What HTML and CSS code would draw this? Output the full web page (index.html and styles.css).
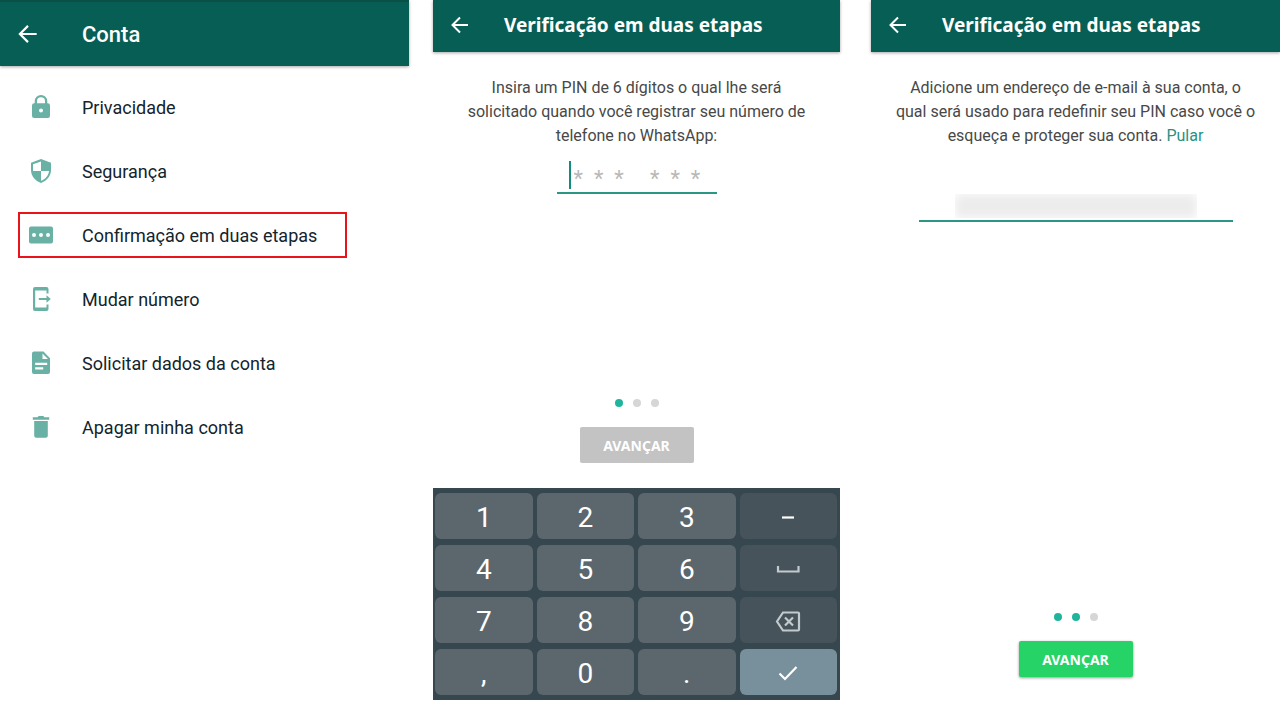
FILE: index.html
```html
<!DOCTYPE html>
<html lang="pt-BR">
<head>
    <meta charset="UTF-8">
    <meta name="viewport" content="width=device-width, initial-scale=1.0">
    <title>Verificação em duas etapas</title>
    <link rel="stylesheet" href="styles.css">
</head>
<body>
    <main class="screens">
        <!-- Conta -->
        <section class="screen">
            <header class="app-bar app-bar-tall">
                <button class="back" aria-label="Voltar">
                    <svg width="26" height="26" viewBox="0 0 24 24"><path d="M4.500 12H20M12 4.500 4.500 12l7.500 7.500"/></svg>
                </button>
                <h1>Conta</h1>
            </header>
            <nav class="menu">
                <a href="#" class="menu-item">
                    <svg viewBox="0 0 24 24"><path fill-rule="evenodd" d="M18.800 8.300h-.5V6.300a6.300 6.300 0 0 0-12.600 0v2h-.5A2.200 2.200 0 0 0 3 10.500v10.200A2.200 2.200 0 0 0 5.200 23h13.600a2.200 2.200 0 0 0 2.200-2.300V10.500a2.200 2.200 0 0 0-2.200-2.200zM8 6.300a4 4 0 0 1 8 0v2H8zM12 17.600a2 2 0 1 1 0-4 2 2 0 0 1 0 4z"/></svg>
                    <span>Privacidade</span>
                </a>
                <a href="#" class="menu-item">
                    <svg viewBox="0 0 24 24"><path fill-rule="evenodd" d="M12 0 2 3.700V11c0 6 4.300 11 10 13 5.700-2 10-7 10-13V3.700zM12 2.400V12h8c-.5 4.500-3.600 8.300-8 9.800V12H4V5.300z"/></svg>
                    <span>Segurança</span>
                </a>
                <a href="#" class="menu-item selected">
                    <svg viewBox="0 0 24 24"><path fill-rule="evenodd" d="M2 3.500h20a2 2 0 0 1 2 2v13a2 2 0 0 1-2 2H2a2 2 0 0 1-2-2v-13a2 2 0 0 1 2-2zM5 9.900a2 2 0 1 0 0 4 2 2 0 0 0 0-4zm7 0a2 2 0 1 0 0 4 2 2 0 0 0 0-4zm7 0a2 2 0 1 0 0 4 2 2 0 0 0 0-4z"/></svg>
                    <span>Confirmação em duas etapas</span>
                </a>
                <a href="#" class="menu-item">
                    <svg viewBox="0 0 24 24"><path d="M6 0h11.500a2 2 0 0 1 2 2v4.500h-2V3.500H6.200v17h11.300v-3h2V22a2 2 0 0 1-2 2H6a2 2 0 0 1-2-2V2a2 2 0 0 1 2-2zM9.800 10.900h7.700V8.300L21.800 12l-4.300 3.700v-2.600H9.800z"/></svg>
                    <span>Mudar número</span>
                </a>
                <a href="#" class="menu-item">
                    <svg viewBox="0 0 24 24"><path fill-rule="evenodd" d="M5 .5h9.500l6.500 6.700V21a2 2 0 0 1-2 2H5a2 2 0 0 1-2-2V2.500a2 2 0 0 1 2-2zM13.500 2.500V8H19zM6.200 11.800v2.200h12v-2.200zm0 4.500v2.200h8v-2.200z"/></svg>
                    <span>Solicitar dados da conta</span>
                </a>
                <a href="#" class="menu-item">
                    <svg viewBox="0 0 24 24"><path d="M5.200 6h13.600v14.800a2 2 0 0 1-2 2H7.200a2 2 0 0 1-2-2zM3.800 2.300h4.700l1.200-1.300h4.600l1.200 1.300h4.700v2.500H3.800z"/></svg>
                    <span>Apagar minha conta</span>
                </a>
            </nav>
        </section>

        <!-- PIN -->
        <section class="screen screen-pin">
            <header class="app-bar">
                <button class="back" aria-label="Voltar">
                    <svg width="24" height="24" viewBox="0 0 24 24"><path d="M4.500 12H20M12 4.500 4.500 12l7.500 7.500"/></svg>
                </button>
                <h2>Verificação em duas etapas</h2>
            </header>
            <label class="intro" for="pin">Insira um PIN de 6 dígitos o qual lhe será<br>solicitado quando você registrar seu número de<br>telefone no WhatsApp:</label>
            <div class="field pin-field">
                <span class="caret"></span>
                <input id="pin" type="text" inputmode="numeric" placeholder="*&nbsp;&nbsp;*&nbsp;&nbsp;*&nbsp;&nbsp;&nbsp;&nbsp;&thinsp;*&nbsp;&nbsp;*&nbsp;&nbsp;*">
            </div>
            <div class="actions">
                <div class="dots"><i class="on"></i><i></i><i></i></div>
                <button class="next" disabled>AVANÇAR</button>
            </div>
            <div class="keypad">
                <button>1</button>
                <button>2</button>
                <button>3</button>
                <button class="side" aria-label="Menos"><svg class="minus" width="26" height="26" viewBox="0 0 26 26"><path d="M7 13.500h12"/></svg></button>
                <button>4</button>
                <button>5</button>
                <button>6</button>
                <button class="side" aria-label="Espaço"><svg width="26" height="26" viewBox="0 0 26 26"><path d="M3 10v5.500h20.500V10"/></svg></button>
                <button>7</button>
                <button>8</button>
                <button>9</button>
                <button class="side" aria-label="Apagar"><svg width="26" height="26" viewBox="0 0 26 26"><path d="M8 4.500h15a1 1 0 0 1 1 1v16a1 1 0 0 1-1 1H8l-6-9zM10 9.500l8 8m0-8-8 8"/></svg></button>
                <button>,</button>
                <button>0</button>
                <button>.</button>
                <button class="enter" aria-label="Confirmar"><svg width="26" height="26" viewBox="0 0 26 26"><path d="m4.500 13.500 5.500 5.500L21.500 7"/></svg></button>
            </div>
        </section>

        <!-- E-mail -->
        <section class="screen">
            <header class="app-bar">
                <button class="back" aria-label="Voltar">
                    <svg width="24" height="24" viewBox="0 0 24 24"><path d="M4.500 12H20M12 4.500 4.500 12l7.500 7.500"/></svg>
                </button>
                <h2>Verificação em duas etapas</h2>
            </header>
            <p class="intro"><label for="email">Adicione um endereço de e-mail à sua conta, o<br>qual será usado para redefinir seu PIN caso você o<br>esqueça e proteger sua conta.</label> <a href="#">Pular</a></p>
            <div class="field email-field">
                <div class="hidden-email"><input id="email" type="email"></div>
            </div>
            <div class="actions">
                <div class="dots"><i class="on"></i><i class="on"></i><i></i></div>
                <button class="next">AVANÇAR</button>
            </div>
        </section>
    </main>
</body>
</html>
```
FILE: styles.css
```css
* {
    box-sizing: border-box;
}

body {
    margin: 0;
    background: #fff;
    font-family: Roboto, sans-serif;
    color: #13242c;
}

button, input {
    font-family: inherit;
    border: none;
    padding: 0;
}

.screens {
    display: grid;
    grid-template-columns: 409fr 414fr 409fr;
    column-gap: 24px;
    min-height: 100vh;
}

.screen {
    display: flex;
    flex-direction: column;
}

.screen-pin {
    margin-right: 7px;
    padding-bottom: 2px;
}

/* Barra superior */
.app-bar {
    display: flex;
    align-items: center;
    gap: 32px;
    height: 52px;
    padding: 0 15px 2px;
    background: #075e54;
    color: #fff;
    box-shadow: 0 1px 3px rgba(0, 0, 0, 0.35);
}

.app-bar-tall {
    height: 66px;
    gap: 41px;
    padding-bottom: 0;
    border-top: 2px solid #0b4f45;
}

.back {
    display: flex;
    background: none;
    cursor: pointer;
}

.back svg {
    fill: none;
    stroke: #fff;
    stroke-width: 2;
}

h1 {
    margin: 0;
    font-size: 22px;
    font-weight: 500;
}

h2 {
    margin: 0;
    font-family: "Noto Sans", sans-serif;
    font-size: 19px;
    font-weight: 700;
}

/* Lista de opções */
.menu {
    display: flex;
    flex-direction: column;
    gap: 18px;
    padding: 18px 62px 18px 18px;
}

.menu-item {
    display: flex;
    align-items: center;
    gap: 29px;
    height: 46px;
    padding-left: 9px;
    border: 2px solid transparent;
    color: inherit;
    font-size: 18px;
    text-decoration: none;
}

.menu-item svg {
    width: 24px;
    height: 24px;
    fill: #69b1a5;
}

.selected {
    border-color: #e8141c;
}

/* Textos e campos */
.intro {
    margin: 24px 0 0;
    color: #484848;
    font-size: 16px;
    line-height: 24px;
    text-align: center;
}

.intro a {
    color: #2a9184;
    text-decoration: none;
}

.field {
    display: flex;
    align-self: center;
    border-bottom: 2px solid #2c9684;
}

.pin-field {
    width: 160px;
    margin-top: 13px;
    padding: 0 12px 3px;
}

.caret {
    width: 2px;
    height: 28px;
    background: #128c7e;
}

.pin-field input {
    flex: 1;
    min-width: 0;
    height: 28px;
    padding: 7px 0 0 3px;
    font-size: 22px;
    outline: none;
}

.pin-field input::placeholder {
    color: #b9b9b9;
}

.email-field {
    justify-content: center;
    width: 314px;
    margin-top: 46px;
    padding-bottom: 2px;
}

/* Endereço escondido */
.hidden-email {
    width: 242px;
    height: 24px;
    overflow: hidden;
}

.hidden-email input {
    width: 100%;
    height: 24px;
    background: #ececec;
    filter: blur(5px);
}

/* Rodapé */
.actions {
    display: flex;
    flex-direction: column;
    align-items: center;
    gap: 20px;
    margin-top: auto;
    padding-bottom: 25px;
}

.dots {
    display: flex;
    gap: 10px;
}

.dots i {
    width: 8px;
    height: 8px;
    border-radius: 50%;
    background: #d6d6d6;
}

.dots .on {
    background: #1fb59c;
}

.next {
    width: 114px;
    height: 36px;
    border-radius: 2px;
    background: #25d366;
    box-shadow: 0 1px 3px rgba(0, 0, 0, 0.4);
    color: #fff;
    font-family: "Noto Sans", sans-serif;
    font-size: 14px;
    font-weight: 700;
    cursor: pointer;
}

.next:disabled {
    background: #c3c3c3;
    box-shadow: none;
    cursor: default;
}

/* Teclado */
.keypad {
    display: grid;
    grid-template-columns: repeat(4, 1fr);
    gap: 6px 4px;
    padding: 5px 3px 5px 2px;
    background: #37474f;
}

.keypad button {
    display: flex;
    align-items: center;
    justify-content: center;
    height: 46px;
    padding-top: 2px;
    border-radius: 6px;
    background: #5b676d;
    color: #fff;
    font-size: 28px;
}

.keypad .side {
    background: #46535a;
}

.keypad .enter {
    background: #78909c;
}

.keypad svg {
    fill: none;
    stroke: #c2cacd;
    stroke-width: 2.2;
}

.keypad .minus,
.keypad .enter svg {
    stroke: #fff;
}
```
